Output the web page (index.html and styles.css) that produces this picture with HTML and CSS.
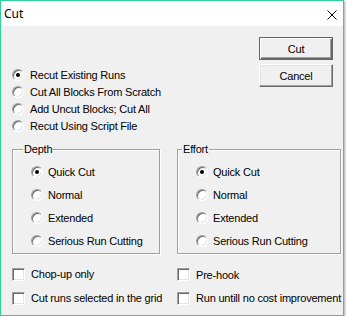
FILE: index.html
```html
<!DOCTYPE html>
<html lang="en">
    <head>
        <meta charset="UTF-8">
        <title>Cut</title>
        <link rel="stylesheet" href="styles.css">
    </head>
    <body>
        <div class="window">
            <div class="titlebar">
                <span class="title">Cut</span>
                <svg class="close" width="10" height="10" viewBox="0 0 10 10">
                    <path d="M0.5 0.5 L9.5 9.5 M9.5 0.5 L0.5 9.5" stroke="#000" stroke-width="1" fill="none" />
                </svg>
            </div>

            <div class="content">
                <div class="top">
                    <div class="modes">
                        <div class="option"><span class="radio checked"></span>Recut Existing Runs</div>
                        <div class="option"><span class="radio"></span>Cut All Blocks From Scratch</div>
                        <div class="option"><span class="radio"></span>Add Uncut Blocks; Cut All</div>
                        <div class="option"><span class="radio"></span>Recut Using Script File</div>
                    </div>
                    <div class="actions">
                        <button class="btn default">Cut</button>
                        <button class="btn">Cancel</button>
                    </div>
                </div>

                <div class="groups">
                    <fieldset class="group depth">
                        <legend>Depth</legend>
                        <div class="option"><span class="radio checked"></span>Quick Cut</div>
                        <div class="option"><span class="radio"></span>Normal</div>
                        <div class="option"><span class="radio"></span>Extended</div>
                        <div class="option"><span class="radio"></span>Serious Run Cutting</div>
                    </fieldset>
                    <fieldset class="group effort">
                        <legend>Effort</legend>
                        <div class="option"><span class="radio checked"></span>Quick Cut</div>
                        <div class="option"><span class="radio"></span>Normal</div>
                        <div class="option"><span class="radio"></span>Extended</div>
                        <div class="option"><span class="radio"></span>Serious Run Cutting</div>
                    </fieldset>
                </div>

                <div class="flags">
                    <div class="check"><span class="box"></span>Chop-up only</div>
                    <div class="check prehook"><span class="box"></span>Pre-hook</div>
                    <div class="check"><span class="box"></span>Cut runs selected in the grid</div>
                    <div class="check"><span class="box"></span>Run untill no cost improvement</div>
                </div>
            </div>
        </div>
    </body>
</html>
```

FILE: styles.css
```css
body {
    margin: 0;
    background-color: #fff;
    font-family: "Liberation Sans", Arial, sans-serif;
    font-size: 11px;
    letter-spacing: -0.2px;
    color: #000;
}

.window {
    width: 344px;
    height: 316px;
    box-sizing: border-box;
    border: 1px solid #2fd196;
    background-color: #f0f0f0;
    box-shadow: 1px 1px 2px rgba(0, 0, 0, 0.35);
    display: flex;
    flex-direction: column;
}

.titlebar {
    height: 25px;
    background-color: #fff;
    display: flex;
    align-items: center;
    justify-content: space-between;
    padding-left: 3px;
}

.title {
    font-family: "Noto Sans", sans-serif;
    font-size: 12px;
    letter-spacing: 0;
}

.close {
    margin-right: 6px;
    margin-top: 2px;
}

.content {
    padding: 11px 1px 0 11px;
}

.top {
    display: flex;
}

.modes {
    margin-top: 29px;
}

.option {
    display: flex;
    align-items: center;
    gap: 6px;
    height: 17px;
    white-space: nowrap;
}

.actions {
    margin-left: auto;
    margin-right: 9px;
    display: flex;
    flex-direction: column;
    gap: 4px;
}

.btn {
    width: 74px;
    height: 23px;
    box-sizing: border-box;
    padding: 0;
    font-family: "Liberation Sans", Arial, sans-serif;
    font-size: 11px;
    letter-spacing: -0.2px;
    color: #000;
    background-color: #f0f0f0;
    border: 1px solid;
    border-color: #fff #696969 #696969 #fff;
    box-shadow: inset -1px -1px 0 #a0a0a0, inset 1px 1px 0 #e3e3e3;
}

.btn.default {
    border-color: #646464;
    box-shadow: inset 1px 1px 0 #fff, inset -1px -1px 0 #696969, inset -2px -2px 0 #a0a0a0;
}

.radio {
    width: 12px;
    height: 12px;
    box-sizing: border-box;
    border-radius: 50%;
    background-color: #fff;
    border: 1px solid;
    border-color: #a0a0a0 #fff #fff #a0a0a0;
    box-shadow: inset 1px 1px 0 #696969, inset -1px -1px 0 #e3e3e3;
    display: flex;
    align-items: center;
    justify-content: center;
    flex: none;
}

.radio.checked::after {
    content: "";
    width: 4px;
    height: 4px;
    border-radius: 50%;
    background-color: #000;
}

.groups {
    display: flex;
    gap: 17px;
    margin-top: 9px;
}

.group {
    margin: 0;
    padding: 4px 0 1px 18px;
    min-width: 0;
    border: 1px solid #a0a0a0;
    box-shadow: inset 1px 1px 0 #fff, 1px 1px 0 #fff;
}

.group legend {
    padding: 0 1px;
    line-height: 13px;
}

.group .option {
    height: 23px;
    gap: 5px;
}

.depth {
    width: 148px;
    box-sizing: border-box;
}

.depth legend {
    margin-left: -8px;
}

.effort {
    width: 164px;
    box-sizing: border-box;
}

.effort legend {
    margin-left: -14px;
}

.flags {
    display: grid;
    grid-template-columns: 165px 1fr;
    grid-auto-rows: 24px;
    margin-top: 8px;
}

.check {
    display: flex;
    align-items: center;
    gap: 6px;
    white-space: nowrap;
}

.prehook {
    padding-top: 1px;
}

.box {
    width: 13px;
    height: 13px;
    box-sizing: border-box;
    background-color: #fff;
    border: 1px solid;
    border-color: #a0a0a0 #fff #fff #a0a0a0;
    box-shadow: inset 1px 1px 0 #696969, inset -1px -1px 0 #e3e3e3;
    flex: none;
}
```
